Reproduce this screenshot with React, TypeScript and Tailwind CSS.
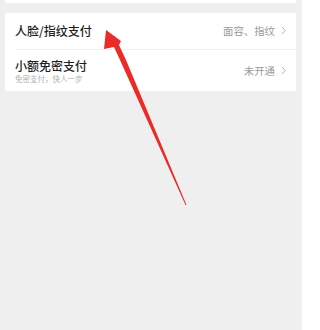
import React from "react";

const font = { fontFamily: '"Noto Sans CJK SC", "Noto Sans", sans-serif' };

function Chevron() {
  return (
    <svg width="5" height="9" viewBox="0 0 5 9" className="ml-[6px]">
      <path d="M0.8 0.8 L4.2 4.5 L0.8 8.2" fill="none" stroke="#b5b5b5" strokeWidth="1" />
    </svg>
  );
}

export default function App() {
  return (
    <div className="relative w-[302px] h-[330px] overflow-hidden bg-[#efefef]" style={font}>
      {/* end of the card above */}
      <div className="ml-[5px] mr-[6px] h-[3px] bg-white" />

      <div className="ml-[5px] mr-[6px] mt-[10px] bg-white">
        <div className="flex h-[36px] items-center justify-between pl-[10px] pr-[10px]">
          <span className="text-[12px] font-medium text-[#1f1f1f]">人脸/指纹支付</span>
          <div className="flex items-center">
            <span className="text-[10.4px] text-[#9b9b9b]">面容、指纹</span>
            <Chevron />
          </div>
        </div>
        <div className="ml-[10px] h-px bg-[#f0f0f0]" />
        <div className="flex h-[41px] items-center justify-between pl-[10px] pr-[10px]">
          <div className="flex flex-col pt-[1px]">
            <span className="text-[12px] font-medium leading-[16px] text-[#1f1f1f]">小额免密支付</span>
            <span className="text-[7.5px] leading-[10px] text-[#b0b0b0]">免密支付，快人一步</span>
          </div>
          <div className="flex items-center">
            <span className="text-[10.4px] text-[#9b9b9b]">未开通</span>
            <Chevron />
          </div>
        </div>
      </div>

      {/* annotation arrow */}
      <svg className="absolute left-0 top-0" width="302" height="330" viewBox="0 0 302 330">
        <polygon
          points="106,30 121,41 119,45 126,60 186.5,205 185.5,205 120,60 114,47 104,49"
          fill="#ea2c28"
        />
      </svg>
    </div>
  );
}
